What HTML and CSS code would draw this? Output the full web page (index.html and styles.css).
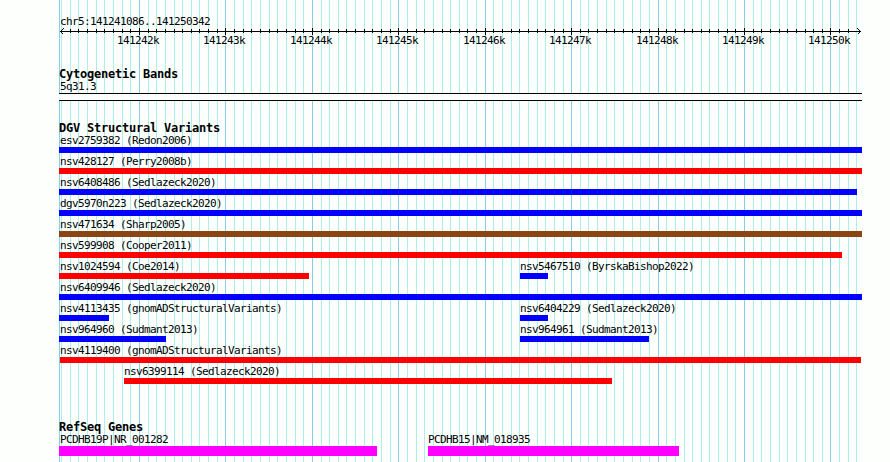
FILE: index.html
```
<!DOCTYPE html>
<html lang="en">
<head>
  <meta charset="UTF-8">
  <meta name="viewport" content="width=device-width, initial-scale=1.0">
  <title>chr5:141241086..141250342</title>
  <link rel="stylesheet" href="styles.css">
</head>
<body>

  <main class="browser">
    <!-- Grid lines, one every 100 bp -->
    <svg class="grid" id="grid" width="803" height="462" shape-rendering="crispEdges"></svg>

    <!-- Ruler -->
    <section class="ruler">
      <p class="label">chr5:141241086..141250342</p>
      <svg class="axis" id="axis" width="803" height="7" shape-rendering="crispEdges">
        <path d="M1 3.5H802" />
        <path class="arrow" d="M4.5 0.5L1.5 3.5L4.5 6.5M798.5 0.5L801.5 3.5L798.5 6.5" />
      </svg>
      <div class="ticks" id="ticks"></div>
    </section>

    <!-- Cytogenetic Bands -->
    <section class="track cyto">
      <h2>Cytogenetic Bands</h2>
      <p class="label">5q31.3</p>
      <div class="band"></div>
    </section>

    <!-- DGV Structural Variants -->
    <section class="track variants">
      <h2>DGV Structural Variants</h2>
      <div class="row">
        <div class="feature gain" style="width: 803px">esv2759382 (Redon2006)</div>
      </div>
      <div class="row">
        <div class="feature loss" style="width: 803px">nsv428127 (Perry2008b)</div>
      </div>
      <div class="row">
        <div class="feature gain" style="width: 798px">nsv6408486 (Sedlazeck2020)</div>
      </div>
      <div class="row">
        <div class="feature gain" style="width: 803px">dgv5970n223 (Sedlazeck2020)</div>
      </div>
      <div class="row">
        <div class="feature both" style="width: 803px">nsv471634 (Sharp2005)</div>
      </div>
      <div class="row">
        <div class="feature loss" style="width: 783px">nsv599908 (Cooper2011)</div>
      </div>
      <div class="row">
        <div class="feature loss" style="width: 250px">nsv1024594 (Coe2014)</div>
        <div class="feature gain inner" style="margin-left: 461px; width: 28px">nsv5467510 (ByrskaBishop2022)</div>
      </div>
      <div class="row">
        <div class="feature gain" style="width: 803px">nsv6409946 (Sedlazeck2020)</div>
      </div>
      <div class="row">
        <div class="feature gain" style="width: 50px">nsv4113435 (gnomADStructuralVariants)</div>
        <div class="feature gain inner" style="margin-left: 461px; width: 28px">nsv6404229 (Sedlazeck2020)</div>
      </div>
      <div class="row">
        <div class="feature gain" style="width: 107px">nsv964960 (Sudmant2013)</div>
        <div class="feature gain inner" style="margin-left: 461px; width: 129px">nsv964961 (Sudmant2013)</div>
      </div>
      <div class="row">
        <div class="feature loss inner" style="margin-left: 1px; width: 801px">nsv4119400 (gnomADStructuralVariants)</div>
      </div>
      <div class="row">
        <div class="feature loss inner" style="margin-left: 65px; width: 488px">nsv6399114 (Sedlazeck2020)</div>
      </div>
    </section>

    <!-- RefSeq Genes -->
    <section class="track genes">
      <h2>RefSeq Genes</h2>
      <div class="row">
        <div class="feature gene" style="width: 318px">PCDHB19P|NR_001282</div>
        <div class="feature gene inner" style="margin-left: 369px; width: 251px">PCDHB15|NM_018935</div>
      </div>
    </section>
  </main>

  <script>
    const start = 141241086;
    const end = 141250342;
    const svgNS = "http://www.w3.org/2000/svg";
    const grid = document.getElementById("grid");
    const axis = document.getElementById("axis");
    const ticks = document.getElementById("ticks");

    function addLine(svg, x, y1, y2, name) {
      const line = document.createElementNS(svgNS, "path");
      line.setAttribute("d", `M${x + 0.5} ${y1}V${y2}`);
      line.setAttribute("class", name);
      svg.appendChild(line);
    }

    addLine(grid, 0, 0, 462, "major");

    for (let pos = 141241100; pos < end; pos += 100) {
      const x = Math.round(1 + (pos - start) * 800 / (end - start));
      const major = pos % 1000 === 0;

      addLine(grid, x, 0, 462, major ? "major" : "minor");

      // No ticks under the arrow heads
      if (x > 5 && x < 796) {
        addLine(axis, x, major ? 0 : 1, major ? 7 : 5, "tick");
      }

      if (major) {
        const label = document.createElement("span");
        label.textContent = pos / 1000 + "k";
        label.style.marginLeft = x - 22 + "px";
        ticks.appendChild(label);
      }
    }
  </script>

</body>
</html>
```
FILE: styles.css
```
/* Basic Reset */
* {
  margin: 0;
  padding: 0;
  box-sizing: border-box;
}

body {
  background-color: #fdfffc;
  color: #000;
  font-family: "DejaVu Sans Mono", monospace;
  font-size: 11px;
  letter-spacing: -0.62px;
  line-height: 12px;
}

.browser {
  position: relative;
  width: 803px;
  height: 462px;
  margin-left: 59px;
  padding-top: 15px;
  overflow: hidden;
  white-space: nowrap;
}

.label {
  height: 12px;
  padding-left: 1px;
  line-height: 14px;
}

/* Grid */
.grid {
  position: absolute;
  top: 0;
  left: 0;
  z-index: -1;
}

.grid .major {
  stroke: #87ceeb;
}

.grid .minor {
  stroke: #afeeee;
}

/* Ruler */
.axis {
  display: block;
  margin-top: 1px;
  fill: none;
  stroke: #000;
}

.ticks {
  display: grid;
  height: 12px;
}

.ticks span {
  grid-area: 1 / 1;
}

/* Tracks */
.track h2 {
  height: 12px;
  font-size: 12px;
  font-weight: bold;
  letter-spacing: -0.22px;
  line-height: 12px;
}

.cyto {
  margin-top: 21px;
}

.band {
  height: 8px;
  margin-top: 1px;
  border-top: 1px solid #000;
  border-bottom: 1px solid #000;
  background-color: #fdfffc;
}

.variants {
  margin-top: 21px;
}

.row {
  display: grid;
  height: 21px;
}

.feature {
  grid-area: 1 / 1;
  height: 19px;
  padding-left: 1px;
  border-bottom: 6px solid;
  line-height: 14px;
}

.feature.inner {
  padding-left: 0;
}

.gain {
  border-bottom-color: #0000ff;
}

.loss {
  border-bottom-color: #ff0000;
}

.both {
  border-bottom-color: #8b4513;
}

/* Genes */
.genes {
  margin-top: 35px;
}

.genes .row {
  height: 24px;
}

.gene {
  height: 23px;
  border-bottom: 10px solid #ff00ff;
}
```
